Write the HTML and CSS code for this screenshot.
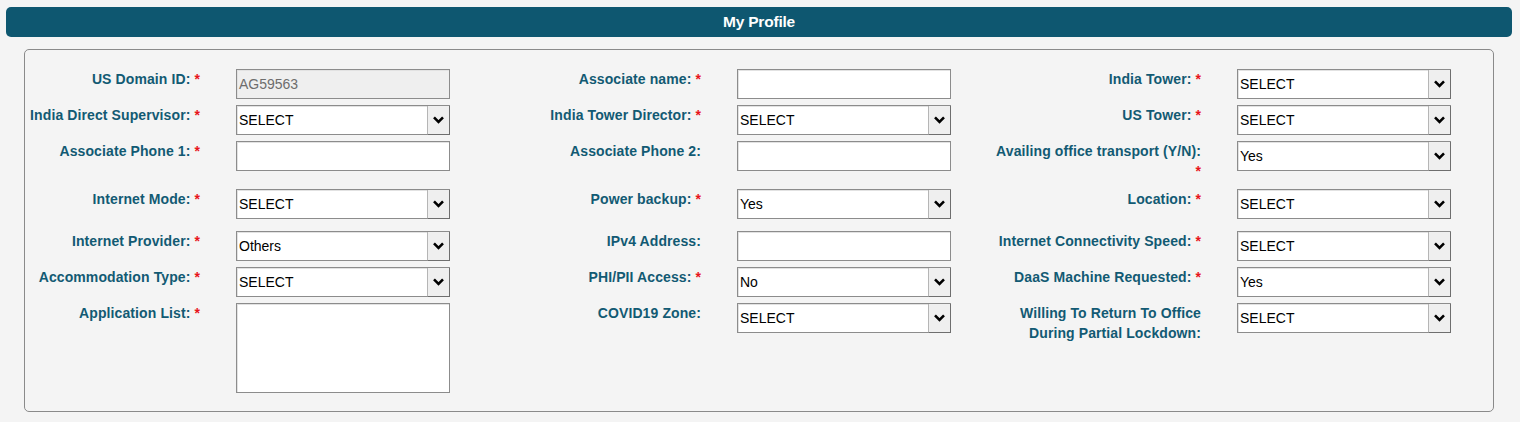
FILE: index.html
```html
<!DOCTYPE html>
<html>
<head>
<meta charset="utf-8">
<title>My Profile</title>
<link rel="stylesheet" href="styles.css">
</head>
<body>
<div class="header">My Profile</div>
<div class="panel">
  <div class="form-grid">
    <!-- row 1 -->
    <div class="lbl"><span>US Domain ID: <span class="req">*</span></span></div>
    <div class="field"><div class="box txt disabled">AG59563</div></div>
    <div class="lbl"><span>Associate name: <span class="req">*</span></span></div>
    <div class="field"><div class="box txt"></div></div>
    <div class="lbl"><span>India Tower: <span class="req">*</span></span></div>
    <div class="field"><div class="box sel"><span class="val">SELECT</span><span class="btn"><svg width="11" height="8" viewBox="0 0 11 8"><path d="M1 1.3 L5.5 5.8 L10 1.3" fill="none" stroke="#000" stroke-width="2.6"/></svg></span></div></div>

    <!-- row 2 -->
    <div class="lbl"><span>India Direct Supervisor: <span class="req">*</span></span></div>
    <div class="field"><div class="box sel"><span class="val">SELECT</span><span class="btn"><svg width="11" height="8" viewBox="0 0 11 8"><path d="M1 1.3 L5.5 5.8 L10 1.3" fill="none" stroke="#000" stroke-width="2.6"/></svg></span></div></div>
    <div class="lbl"><span>India Tower Director: <span class="req">*</span></span></div>
    <div class="field"><div class="box sel"><span class="val">SELECT</span><span class="btn"><svg width="11" height="8" viewBox="0 0 11 8"><path d="M1 1.3 L5.5 5.8 L10 1.3" fill="none" stroke="#000" stroke-width="2.6"/></svg></span></div></div>
    <div class="lbl"><span>US Tower: <span class="req">*</span></span></div>
    <div class="field"><div class="box sel"><span class="val">SELECT</span><span class="btn"><svg width="11" height="8" viewBox="0 0 11 8"><path d="M1 1.3 L5.5 5.8 L10 1.3" fill="none" stroke="#000" stroke-width="2.6"/></svg></span></div></div>

    <!-- row 3 -->
    <div class="lbl"><span>Associate Phone 1: <span class="req">*</span></span></div>
    <div class="field"><div class="box txt"></div></div>
    <div class="lbl"><span>Associate Phone 2:</span></div>
    <div class="field"><div class="box txt"></div></div>
    <div class="lbl"><span>Availing office transport (Y/N):<br><span class="req">*</span></span></div>
    <div class="field"><div class="box sel"><span class="val">Yes</span><span class="btn"><svg width="11" height="8" viewBox="0 0 11 8"><path d="M1 1.3 L5.5 5.8 L10 1.3" fill="none" stroke="#000" stroke-width="2.6"/></svg></span></div></div>

    <!-- row 4 -->
    <div class="lbl"><span>Internet Mode: <span class="req">*</span></span></div>
    <div class="field"><div class="box sel"><span class="val">SELECT</span><span class="btn"><svg width="11" height="8" viewBox="0 0 11 8"><path d="M1 1.3 L5.5 5.8 L10 1.3" fill="none" stroke="#000" stroke-width="2.6"/></svg></span></div></div>
    <div class="lbl"><span>Power backup: <span class="req">*</span></span></div>
    <div class="field"><div class="box sel"><span class="val">Yes</span><span class="btn"><svg width="11" height="8" viewBox="0 0 11 8"><path d="M1 1.3 L5.5 5.8 L10 1.3" fill="none" stroke="#000" stroke-width="2.6"/></svg></span></div></div>
    <div class="lbl"><span>Location: <span class="req">*</span></span></div>
    <div class="field"><div class="box sel"><span class="val">SELECT</span><span class="btn"><svg width="11" height="8" viewBox="0 0 11 8"><path d="M1 1.3 L5.5 5.8 L10 1.3" fill="none" stroke="#000" stroke-width="2.6"/></svg></span></div></div>

    <!-- row 5 -->
    <div class="lbl"><span>Internet Provider: <span class="req">*</span></span></div>
    <div class="field"><div class="box sel"><span class="val">Others</span><span class="btn"><svg width="11" height="8" viewBox="0 0 11 8"><path d="M1 1.3 L5.5 5.8 L10 1.3" fill="none" stroke="#000" stroke-width="2.6"/></svg></span></div></div>
    <div class="lbl"><span>IPv4 Address:</span></div>
    <div class="field"><div class="box txt"></div></div>
    <div class="lbl"><span>Internet Connectivity Speed: <span class="req">*</span></span></div>
    <div class="field"><div class="box sel"><span class="val">SELECT</span><span class="btn"><svg width="11" height="8" viewBox="0 0 11 8"><path d="M1 1.3 L5.5 5.8 L10 1.3" fill="none" stroke="#000" stroke-width="2.6"/></svg></span></div></div>

    <!-- row 6 -->
    <div class="lbl"><span>Accommodation Type: <span class="req">*</span></span></div>
    <div class="field"><div class="box sel"><span class="val">SELECT</span><span class="btn"><svg width="11" height="8" viewBox="0 0 11 8"><path d="M1 1.3 L5.5 5.8 L10 1.3" fill="none" stroke="#000" stroke-width="2.6"/></svg></span></div></div>
    <div class="lbl"><span>PHI/PII Access: <span class="req">*</span></span></div>
    <div class="field"><div class="box sel"><span class="val">No</span><span class="btn"><svg width="11" height="8" viewBox="0 0 11 8"><path d="M1 1.3 L5.5 5.8 L10 1.3" fill="none" stroke="#000" stroke-width="2.6"/></svg></span></div></div>
    <div class="lbl"><span>DaaS Machine Requested: <span class="req">*</span></span></div>
    <div class="field"><div class="box sel"><span class="val">Yes</span><span class="btn"><svg width="11" height="8" viewBox="0 0 11 8"><path d="M1 1.3 L5.5 5.8 L10 1.3" fill="none" stroke="#000" stroke-width="2.6"/></svg></span></div></div>

    <!-- row 7 -->
    <div class="lbl"><span>Application List: <span class="req">*</span></span></div>
    <div class="field"><div class="box area"></div></div>
    <div class="lbl"><span>COVID19 Zone:</span></div>
    <div class="field"><div class="box sel"><span class="val">SELECT</span><span class="btn"><svg width="11" height="8" viewBox="0 0 11 8"><path d="M1 1.3 L5.5 5.8 L10 1.3" fill="none" stroke="#000" stroke-width="2.6"/></svg></span></div></div>
    <div class="lbl"><span>Willing To Return To Office<br>During Partial Lockdown:</span></div>
    <div class="field"><div class="box sel"><span class="val">SELECT</span><span class="btn"><svg width="11" height="8" viewBox="0 0 11 8"><path d="M1 1.3 L5.5 5.8 L10 1.3" fill="none" stroke="#000" stroke-width="2.6"/></svg></span></div></div>
  </div>
</div>
</body>
</html>
```

FILE: styles.css
```css
html, body {
  margin: 0;
  padding: 0;
  background: #f4f4f4;
}

body {
  padding: 7px 8px 0 6px;
  font-family: "Liberation Sans", Arial, sans-serif;
}

.header {
  height: 30px;
  line-height: 30px;
  background: #0e5770;
  color: #ffffff;
  text-align: center;
  font-weight: bold;
  font-size: 15.5px;
  letter-spacing: -0.2px;
  border-radius: 5px;
}

.panel {
  margin: 12px 18px 0 18px;
  border: 1px solid #8a8a8a;
  border-radius: 5px;
  padding: 19px 0 18px 0;
}

.form-grid {
  display: grid;
  grid-template-columns: 211px 290px 211px 289px 211px 1fr;
  grid-template-rows: 36px 36px 48px 42px 36px 36px auto;
}

.lbl {
  display: flex;
  justify-content: flex-end;
  align-items: flex-start;
  padding-right: 36px;
  min-width: 0;
}

.lbl > span {
  text-align: right;
  font-size: 14px;
  letter-spacing: 0.1px;
  line-height: 20px;
  font-weight: bold;
  color: #125a73;
  white-space: nowrap;
  flex-shrink: 0;
}

.req {
  color: #e8141c;
}

.field {
  display: flex;
  align-items: flex-start;
}

.box {
  box-sizing: border-box;
  width: 214px;
  height: 30px;
  background: #ffffff;
  border: 1px solid #8c8c8c;
  box-shadow: inset 1px 1px 0 #e2e2e2;
  font-size: 14px;
  color: #000;
}

.txt {
  padding: 0 2px;
  line-height: 28px;
}

.txt.disabled {
  background: #efefef;
  color: #6d6d6d;
}

.area {
  height: 90px;
}

.sel {
  display: flex;
  align-items: stretch;
}

.sel .val {
  flex: 1;
  padding-left: 2px;
  line-height: 28px;
}

.sel .btn {
  width: 21px;
  display: flex;
  align-items: center;
  justify-content: center;
  background: #efefef;
  border-left: 1px solid #b5b5b5;
  border-right: 1px solid #6e6e6e;
  border-bottom: 1px solid #6e6e6e;
  margin: 0 -1px -1px 0;
}
```
